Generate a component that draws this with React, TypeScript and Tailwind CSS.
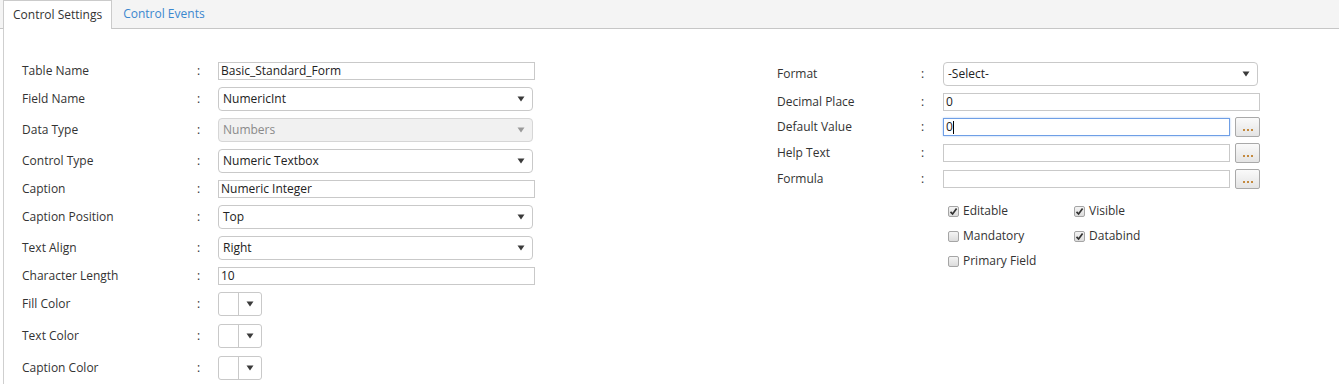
import React from "react";

const font = { fontFamily: '"Open Sans", "Noto Sans", sans-serif' };

function Arrow({ dim = false }: { dim?: boolean }) {
  return (
    <svg width="8" height="6" viewBox="0 0 8 6" className="shrink-0">
      <path d="M0.5 0.5 L7.5 0.5 L4 5.5 Z" fill={dim ? "#9a9a9a" : "#3a3a3a"} />
    </svg>
  );
}

function LRow({ label, children, h, cls = "" }: { label: string; children: React.ReactNode; h: string; cls?: string }) {
  return (
    <div className={`flex items-center ${h} ${cls}`}>
      <span className="w-[175px] shrink-0 text-[12px] text-[#333]">{label}</span>
      <span className="w-[21px] shrink-0 text-[12px] text-[#333]">:</span>
      {children}
    </div>
  );
}

function RRow({ label, children, h, cls = "" }: { label: string; children: React.ReactNode; h: string; cls?: string }) {
  return (
    <div className={`flex items-center ${h} ${cls}`}>
      <span className="w-[144px] shrink-0 text-[12px] text-[#333]">{label}</span>
      <span className="w-[22px] shrink-0 text-[12px] text-[#333]">:</span>
      {children}
    </div>
  );
}

function TextBox({ value, w }: { value: string; w: string }) {
  return (
    <div className={`${w} h-[18px] border border-[#c9c9c9] bg-white flex items-center pl-[2px] text-[12px] text-[#222] leading-none`}>
      {value}
    </div>
  );
}

function Select({ value, w, disabled = false }: { value: string; w: string; disabled?: boolean }) {
  return (
    <div
      className={`${w} h-[24px] rounded-[4px] border flex items-center justify-between pl-[4px] pr-[7px] text-[12px] leading-none ${
        disabled ? "bg-[#f1f1f1] border-[#d6d6d6] text-[#8a8a8a]" : "bg-white border-[#c9c9c9] text-[#222]"
      }`}
    >
      <span>{value}</span>
      <Arrow dim={disabled} />
    </div>
  );
}

function Swatch() {
  return (
    <div className="w-[44px] h-[24px] rounded-[3px] border border-[#c9c9c9] bg-white flex">
      <div className="w-[20px] border-r border-[#c9c9c9]" />
      <div className="flex-1 flex items-center justify-center">
        <Arrow />
      </div>
    </div>
  );
}

function DotsButton() {
  return (
    <div className="w-[25px] h-[20px] rounded-[2px] border border-[#a9a9a9] bg-gradient-to-b from-[#fafafa] to-[#e4e4e4] flex items-end justify-center pb-[5px] gap-[2px]">
      <span className="w-[2px] h-[2px] bg-[#c48a3f]" />
      <span className="w-[2px] h-[2px] bg-[#c48a3f]" />
      <span className="w-[2px] h-[2px] bg-[#c48a3f]" />
    </div>
  );
}

function Check({ checked, label }: { checked: boolean; label: string }) {
  return (
    <div className="flex items-center h-[16px]">
      <span className="w-[11px] h-[11px] rounded-[2px] border border-[#a5a5a5] bg-gradient-to-b from-[#f4f4f4] to-[#dcdcdc] flex items-center justify-center">
        {checked && (
          <svg width="9" height="9" viewBox="0 0 9 9">
            <path d="M1.5 4.8 L3.6 7 L7.6 1.6" stroke="#333" strokeWidth="1.7" fill="none" />
          </svg>
        )}
      </span>
      <span className="ml-[4px] text-[12px] text-[#333]">{label}</span>
    </div>
  );
}

export default function App() {
  return (
    <div className="w-[1339px] h-[384px] bg-white overflow-hidden" style={font}>
      {/* Tab bar */}
      <div className="h-[29px] bg-[#f4f4f4] flex items-end border-b border-[#c6c6c6] pl-[3px]">
        <div className="h-[29px] -mb-px bg-white border border-b-0 border-[#cbcbcb] px-[9px] flex items-center text-[12px] text-[#333]">
          Control Settings
        </div>
        <div className="h-[28px] px-[11px] flex items-center text-[12px] text-[#3a87cf]">Control Events</div>
      </div>

      {/* Content */}
      <div className="ml-[3px] h-[356px] border-l border-[#cfcfcf] flex pl-[18px] pt-[33px]">
        {/* Left column */}
        <div className="w-[513px] flex flex-col gap-[7px]">
          <LRow label="Table Name" h="h-[18px]"><TextBox value="Basic_Standard_Form" w="w-[317px]" /></LRow>
          <LRow label="Field Name" h="h-[24px]"><Select value="NumericInt" w="w-[315px]" /></LRow>
          <LRow label="Data Type" h="h-[24px]"><Select value="Numbers" w="w-[315px]" disabled /></LRow>
          <LRow label="Control Type" h="h-[24px]"><Select value="Numeric Textbox" w="w-[315px]" /></LRow>
          <LRow label="Caption" h="h-[18px]"><TextBox value="Numeric Integer" w="w-[317px]" /></LRow>
          <LRow label="Caption Position" h="h-[24px]"><Select value="Top" w="w-[315px]" /></LRow>
          <LRow label="Text Align" h="h-[24px]"><Select value="Right" w="w-[315px]" /></LRow>
          <LRow label="Character Length" h="h-[18px]"><TextBox value="10" w="w-[317px]" /></LRow>
          <LRow label="Fill Color" h="h-[24px]"><Swatch /></LRow>
          <LRow label="Text Color" h="h-[24px]" cls="mt-px"><Swatch /></LRow>
          <LRow label="Caption Color" h="h-[24px]" cls="mt-px"><Swatch /></LRow>
        </div>

        {/* Right column */}
        <div className="ml-[242px] w-[490px] flex flex-col">
          <RRow label="Format" h="h-[24px]"><Select value="-Select-" w="w-[315px]" /></RRow>
          <RRow label="Decimal Place" h="h-[18px]" cls="mt-[7px]"><TextBox value="0" w="w-[317px]" /></RRow>
          <RRow label="Default Value" h="h-[20px]" cls="mt-[6px]">
            <div className="w-[287px] h-[18px] border border-[#6f9fe6] shadow-[0_0_2px_#a9c8f2] bg-white flex items-center pl-[2px] text-[12px] text-[#222] leading-none">
              <span>0</span>
              <span className="w-px h-[13px] bg-black" />
            </div>
            <div className="ml-[5px]"><DotsButton /></div>
          </RRow>
          <RRow label="Help Text" h="h-[20px]" cls="mt-[6px]">
            <div className="w-[287px] h-[18px] border border-[#c9c9c9] bg-white" />
            <div className="ml-[5px]"><DotsButton /></div>
          </RRow>
          <RRow label="Formula" h="h-[20px]" cls="mt-[6px]">
            <div className="w-[287px] h-[18px] border border-[#c9c9c9] bg-white" />
            <div className="ml-[5px]"><DotsButton /></div>
          </RRow>
          <div className="ml-[171px] mt-[14px] grid grid-cols-[126px_126px] gap-y-[9px]">
            <Check checked label="Editable" />
            <Check checked label="Visible" />
            <Check checked={false} label="Mandatory" />
            <Check checked label="Databind" />
            <Check checked={false} label="Primary Field" />
          </div>
        </div>
      </div>
    </div>
  );
}
